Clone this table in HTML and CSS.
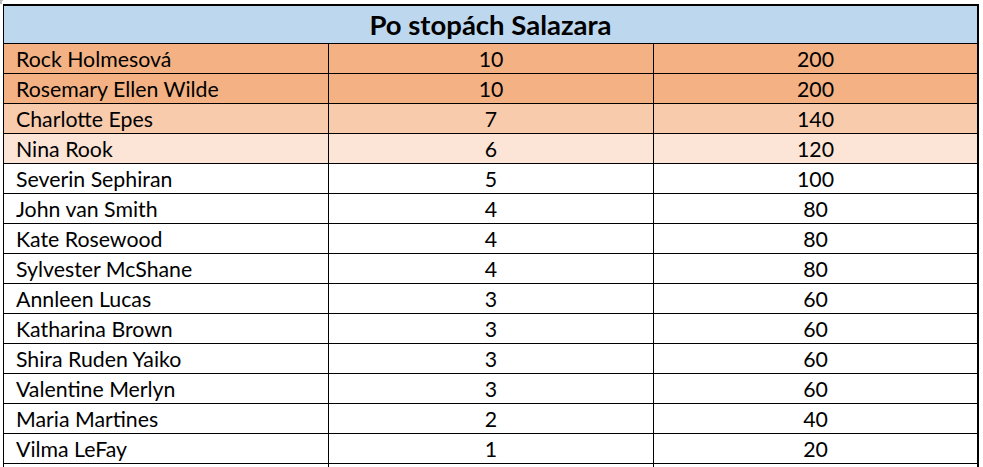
FILE: index.html
```html
<!DOCTYPE html>
<html lang="cs">
<head>
<meta charset="utf-8">
<title>Po stopách Salazara</title>
<link rel="stylesheet" href="styles.css">
</head>
<body>
<div class="sheet">
  <div class="corner"></div>
  <div class="table">
    <div class="title">Po stopách Salazara</div>
    <div class="row gold"><div class="cell name">Rock Holmesová</div><div class="cell num">10</div><div class="cell num">200</div></div>
    <div class="row gold"><div class="cell name">Rosemary Ellen Wilde</div><div class="cell num">10</div><div class="cell num">200</div></div>
    <div class="row silver"><div class="cell name">Charlotte Epes</div><div class="cell num">7</div><div class="cell num">140</div></div>
    <div class="row bronze"><div class="cell name">Nina Rook</div><div class="cell num">6</div><div class="cell num">120</div></div>
    <div class="row"><div class="cell name">Severin Sephiran</div><div class="cell num">5</div><div class="cell num">100</div></div>
    <div class="row"><div class="cell name">John van Smith</div><div class="cell num">4</div><div class="cell num">80</div></div>
    <div class="row"><div class="cell name">Kate Rosewood</div><div class="cell num">4</div><div class="cell num">80</div></div>
    <div class="row"><div class="cell name">Sylvester McShane</div><div class="cell num">4</div><div class="cell num">80</div></div>
    <div class="row"><div class="cell name">Annleen Lucas</div><div class="cell num">3</div><div class="cell num">60</div></div>
    <div class="row"><div class="cell name">Katharina Brown</div><div class="cell num">3</div><div class="cell num">60</div></div>
    <div class="row"><div class="cell name">Shira Ruden Yaiko</div><div class="cell num">3</div><div class="cell num">60</div></div>
    <div class="row"><div class="cell name">Valentine Merlyn</div><div class="cell num">3</div><div class="cell num">60</div></div>
    <div class="row"><div class="cell name">Maria Martines</div><div class="cell num">2</div><div class="cell num">40</div></div>
    <div class="row"><div class="cell name">Vilma LeFay</div><div class="cell num">1</div><div class="cell num">20</div></div>
    <div class="row"><div class="cell name"></div><div class="cell num"></div><div class="cell num"></div></div>
  </div>
</div>
</body>
</html>
```
FILE: styles.css
```css
html, body {
  margin: 0;
  padding: 0;
  background: #ffffff;
  overflow: hidden;
}

.sheet {
  position: relative;
  padding: 4px 0 0 3px;
  font-family: Lato, "Liberation Sans", sans-serif;
  color: #000000;
}

.corner {
  position: absolute;
  left: 0;
  top: 0;
  width: 3px;
  height: 4px;
  border-top: 1px solid #bdbdbd;
  border-left: 2px solid #bdbdbd;
  box-sizing: border-box;
}

.table {
  width: 976px;
  box-sizing: border-box;
  border-top: 2px solid #000;
  border-left: 1px solid #000;
  border-right: 2px solid #000;
}

.title {
  height: 37px;
  border-bottom: 1px solid #000;
  background: #bdd7ee;
  font-weight: 700;
  font-size: 27.5px;
  line-height: 38px;
  text-align: center;
}

.row {
  display: grid;
  grid-template-columns: 324px 324px 323px;
  column-gap: 1px;
  background: #000;
  border-bottom: 1px solid #000;
  height: 29px;
}

.cell {
  background: #ffffff;
  font-size: 21.3px;
  line-height: 30px;
  white-space: nowrap;
  overflow: hidden;
}

.row.gold .cell { background: #f4b183; }
.row.silver .cell { background: #f8cbad; }
.row.bronze .cell { background: #fce4d6; }

.name {
  padding-left: 12px;
}

.num {
  text-align: center;
}
```
